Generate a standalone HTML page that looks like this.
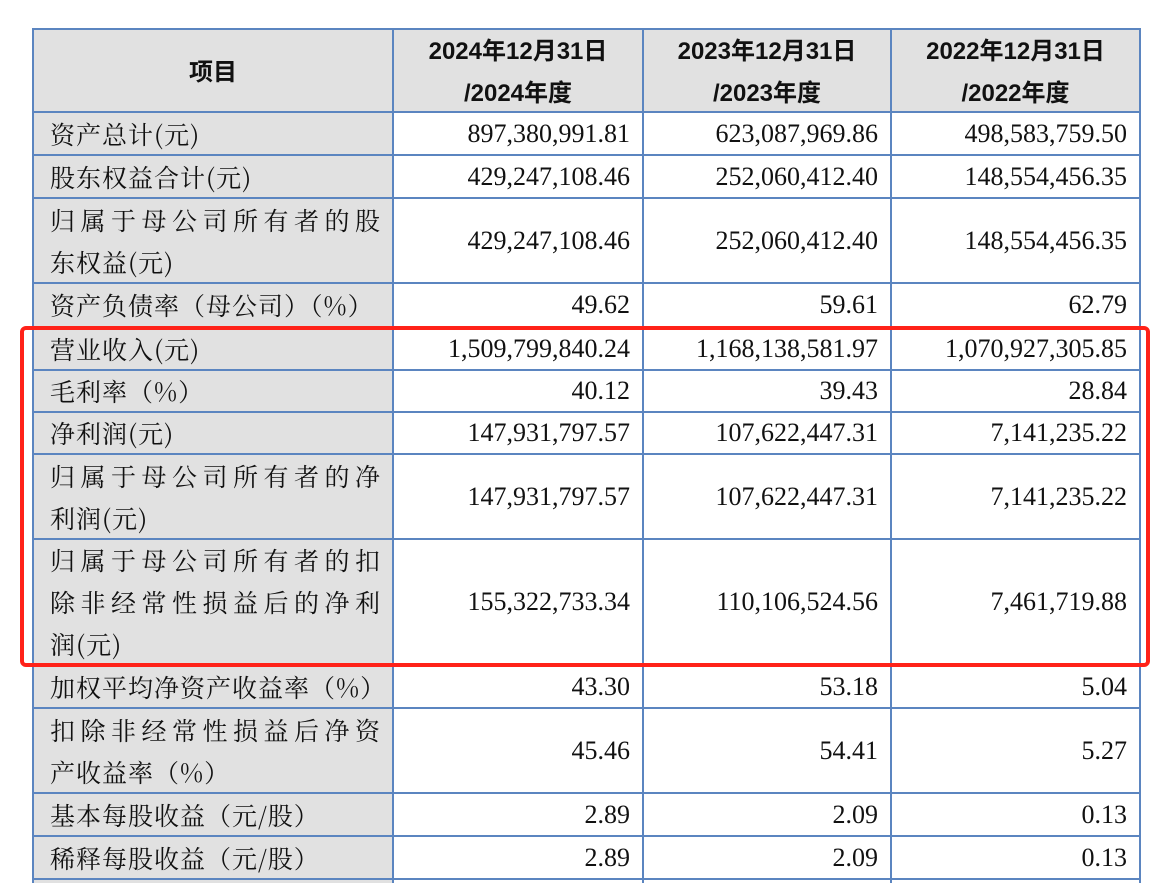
<!DOCTYPE html>
<html><head><meta charset="utf-8"><style>
html,body{margin:0;padding:0;background:#fff;width:1157px;height:883px;overflow:hidden;position:relative}
.c{position:absolute;box-sizing:border-box;border:2px solid #5b85c0;margin:-1px 0 0 -1px;font-family:"Liberation Serif","Noto Serif CJK SC",serif;font-size:25px;color:#111;display:flex;align-items:center}
.g{background:#e1e1e1}
.l{padding-left:16px;letter-spacing:1px;font-family:"Noto Serif CJK SC","Liberation Serif",serif;white-space:nowrap}
.l span{display:block;width:330px;line-height:42px}
.l span i{font-style:normal;display:block;text-align:justify;text-align-last:justify;letter-spacing:0}
.l span b{font-weight:normal;display:block}
.r{justify-content:flex-end;padding-right:12px;font-size:26px}
.h{justify-content:center;text-align:center;font-family:"Liberation Sans","Noto Sans CJK SC",sans-serif;font-weight:bold;font-size:24px;line-height:42px;padding-top:4px}
.red{position:absolute;left:20px;top:326px;width:1130px;height:341px;box-sizing:border-box;border:4px solid #ff2219;border-radius:6px}
</style></head><body>
<div class="c g h" style="left:33px;top:29px;width:362px;height:85px">项目</div>
<div class="c g h" style="left:393px;top:29px;width:252px;height:85px">2024年12月31日<br>/2024年度</div>
<div class="c g h" style="left:643px;top:29px;width:250px;height:85px">2023年12月31日<br>/2023年度</div>
<div class="c g h" style="left:891px;top:29px;width:251px;height:85px">2022年12月31日<br>/2022年度</div>

<div class="c g l" style="left:33px;top:112px;width:362px;height:45px"><span>资产总计(元)</span></div>
<div class="c r" style="left:393px;top:112px;width:252px;height:45px">897,380,991.81</div>
<div class="c r" style="left:643px;top:112px;width:250px;height:45px">623,087,969.86</div>
<div class="c r" style="left:891px;top:112px;width:251px;height:45px">498,583,759.50</div>

<div class="c g l" style="left:33px;top:155px;width:362px;height:45px"><span>股东权益合计(元)</span></div>
<div class="c r" style="left:393px;top:155px;width:252px;height:45px">429,247,108.46</div>
<div class="c r" style="left:643px;top:155px;width:250px;height:45px">252,060,412.40</div>
<div class="c r" style="left:891px;top:155px;width:251px;height:45px">148,554,456.35</div>

<div class="c g l" style="left:33px;top:198px;width:362px;height:87px"><span><i>归属于母公司所有者的股</i><b>东权益(元)</b></span></div>
<div class="c r" style="left:393px;top:198px;width:252px;height:87px">429,247,108.46</div>
<div class="c r" style="left:643px;top:198px;width:250px;height:87px">252,060,412.40</div>
<div class="c r" style="left:891px;top:198px;width:251px;height:87px">148,554,456.35</div>

<div class="c g l" style="left:33px;top:283px;width:362px;height:46px"><span>资产负债率（母公司）（%）</span></div>
<div class="c r" style="left:393px;top:283px;width:252px;height:46px">49.62</div>
<div class="c r" style="left:643px;top:283px;width:250px;height:46px">59.61</div>
<div class="c r" style="left:891px;top:283px;width:251px;height:46px">62.79</div>

<div class="c g l" style="left:33px;top:327px;width:362px;height:45px"><span>营业收入(元)</span></div>
<div class="c r" style="left:393px;top:327px;width:252px;height:45px">1,509,799,840.24</div>
<div class="c r" style="left:643px;top:327px;width:250px;height:45px">1,168,138,581.97</div>
<div class="c r" style="left:891px;top:327px;width:251px;height:45px">1,070,927,305.85</div>

<div class="c g l" style="left:33px;top:370px;width:362px;height:44px"><span>毛利率（%）</span></div>
<div class="c r" style="left:393px;top:370px;width:252px;height:44px">40.12</div>
<div class="c r" style="left:643px;top:370px;width:250px;height:44px">39.43</div>
<div class="c r" style="left:891px;top:370px;width:251px;height:44px">28.84</div>

<div class="c g l" style="left:33px;top:412px;width:362px;height:44px"><span>净利润(元)</span></div>
<div class="c r" style="left:393px;top:412px;width:252px;height:44px">147,931,797.57</div>
<div class="c r" style="left:643px;top:412px;width:250px;height:44px">107,622,447.31</div>
<div class="c r" style="left:891px;top:412px;width:251px;height:44px">7,141,235.22</div>

<div class="c g l" style="left:33px;top:454px;width:362px;height:87px"><span><i>归属于母公司所有者的净</i><b>利润(元)</b></span></div>
<div class="c r" style="left:393px;top:454px;width:252px;height:87px">147,931,797.57</div>
<div class="c r" style="left:643px;top:454px;width:250px;height:87px">107,622,447.31</div>
<div class="c r" style="left:891px;top:454px;width:251px;height:87px">7,141,235.22</div>

<div class="c g l" style="left:33px;top:539px;width:362px;height:128px"><span><i>归属于母公司所有者的扣</i><i>除非经常性损益后的净利</i><b>润(元)</b></span></div>
<div class="c r" style="left:393px;top:539px;width:252px;height:128px">155,322,733.34</div>
<div class="c r" style="left:643px;top:539px;width:250px;height:128px">110,106,524.56</div>
<div class="c r" style="left:891px;top:539px;width:251px;height:128px">7,461,719.88</div>

<div class="c g l" style="left:33px;top:665px;width:362px;height:45px"><span>加权平均净资产收益率（%）</span></div>
<div class="c r" style="left:393px;top:665px;width:252px;height:45px">43.30</div>
<div class="c r" style="left:643px;top:665px;width:250px;height:45px">53.18</div>
<div class="c r" style="left:891px;top:665px;width:251px;height:45px">5.04</div>

<div class="c g l" style="left:33px;top:708px;width:362px;height:87px"><span><i>扣除非经常性损益后净资</i><b>产收益率（%）</b></span></div>
<div class="c r" style="left:393px;top:708px;width:252px;height:87px">45.46</div>
<div class="c r" style="left:643px;top:708px;width:250px;height:87px">54.41</div>
<div class="c r" style="left:891px;top:708px;width:251px;height:87px">5.27</div>

<div class="c g l" style="left:33px;top:793px;width:362px;height:45px"><span>基本每股收益（元/股）</span></div>
<div class="c r" style="left:393px;top:793px;width:252px;height:45px">2.89</div>
<div class="c r" style="left:643px;top:793px;width:250px;height:45px">2.09</div>
<div class="c r" style="left:891px;top:793px;width:251px;height:45px">0.13</div>

<div class="c g l" style="left:33px;top:836px;width:362px;height:45px"><span>稀释每股收益（元/股）</span></div>
<div class="c r" style="left:393px;top:836px;width:252px;height:45px">2.89</div>
<div class="c r" style="left:643px;top:836px;width:250px;height:45px">2.09</div>
<div class="c r" style="left:891px;top:836px;width:251px;height:45px">0.13</div>

<div class="c g" style="left:33px;top:879px;width:362px;height:40px"></div>
<div class="c" style="left:393px;top:879px;width:252px;height:40px"></div>
<div class="c" style="left:643px;top:879px;width:250px;height:40px"></div>
<div class="c" style="left:891px;top:879px;width:251px;height:40px"></div>

<div class="red"></div>
</body></html>
